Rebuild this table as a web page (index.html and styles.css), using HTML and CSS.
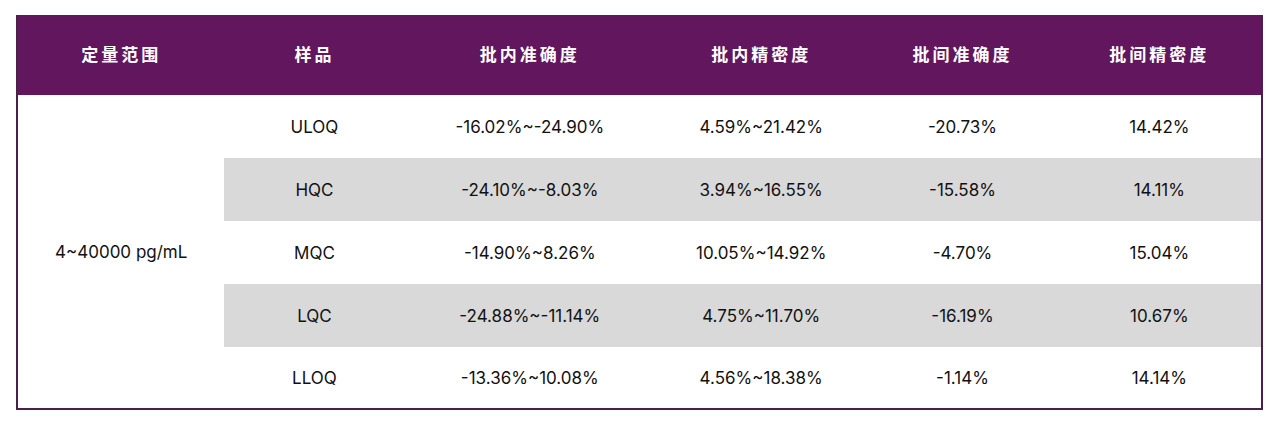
FILE: index.html
```html
<!DOCTYPE html>
<html lang="zh">
<head>
<meta charset="utf-8">
<link rel="stylesheet" href="styles.css">
</head>
<body>
<table class="data">
  <colgroup>
    <col class="c1"><col class="c2"><col class="c3"><col class="c4"><col class="c5"><col class="c6">
  </colgroup>
  <thead>
    <tr>
      <th>定量范围</th><th>样品</th><th>批内准确度</th><th>批内精密度</th><th>批间准确度</th><th>批间精密度</th>
    </tr>
  </thead>
  <tbody>
    <tr>
      <td class="range" rowspan="5">4~40000 pg/mL</td>
      <td>ULOQ</td><td>-16.02%~-24.90%</td><td>4.59%~21.42%</td><td>-20.73%</td><td>14.42%</td>
    </tr>
    <tr class="alt">
      <td>HQC</td><td>-24.10%~-8.03%</td><td>3.94%~16.55%</td><td>-15.58%</td><td>14.11%</td>
    </tr>
    <tr>
      <td>MQC</td><td>-14.90%~8.26%</td><td>10.05%~14.92%</td><td>-4.70%</td><td>15.04%</td>
    </tr>
    <tr class="alt">
      <td>LQC</td><td>-24.88%~-11.14%</td><td>4.75%~11.70%</td><td>-16.19%</td><td>10.67%</td>
    </tr>
    <tr class="last">
      <td>LLOQ</td><td>-13.36%~10.08%</td><td>4.56%~18.38%</td><td>-1.14%</td><td>14.14%</td>
    </tr>
  </tbody>
</table>
</body>
</html>
```

FILE: styles.css
```css
html, body {
  margin: 0;
  padding: 0;
  background: #ffffff;
}
body {
  padding: 15px 16px;
  font-family: "Noto Sans CJK SC", "Noto Sans", sans-serif;
}
.data {
  width: 1247px;
  border-collapse: collapse;
  table-layout: fixed;
  border-left: 2px solid #4d2049;
  border-right: 2px solid #4d2049;
  border-bottom: 2px solid #4d2049;
}
.c1 { width: 207px; }
.c2 { width: 180px; }
.c3 { width: 250px; }
.c4 { width: 212px; }
.c5 { width: 190px; }
.c6 { width: 204px; }
.data th {
  background: #61165e;
  color: #ffffff;
  height: 80px;
  padding: 0 0 2px 0;
  box-sizing: border-box;
  font-size: 17px;
  line-height: 20px;
  font-weight: 700;
  letter-spacing: 3px;
  text-align: center;
  vertical-align: middle;
}
.data td {
  height: 63px;
  padding: 0;
  box-sizing: border-box;
  font-family: "Inter", "Noto Sans", sans-serif;
  font-size: 17px;
  line-height: 20px;
  color: #111111;
  text-align: center;
  vertical-align: middle;
}
.data tr.last td { height: 62px; }
.data tr.alt td { background: #d9d9d9; }
.data td.range { background: #ffffff; }
```
